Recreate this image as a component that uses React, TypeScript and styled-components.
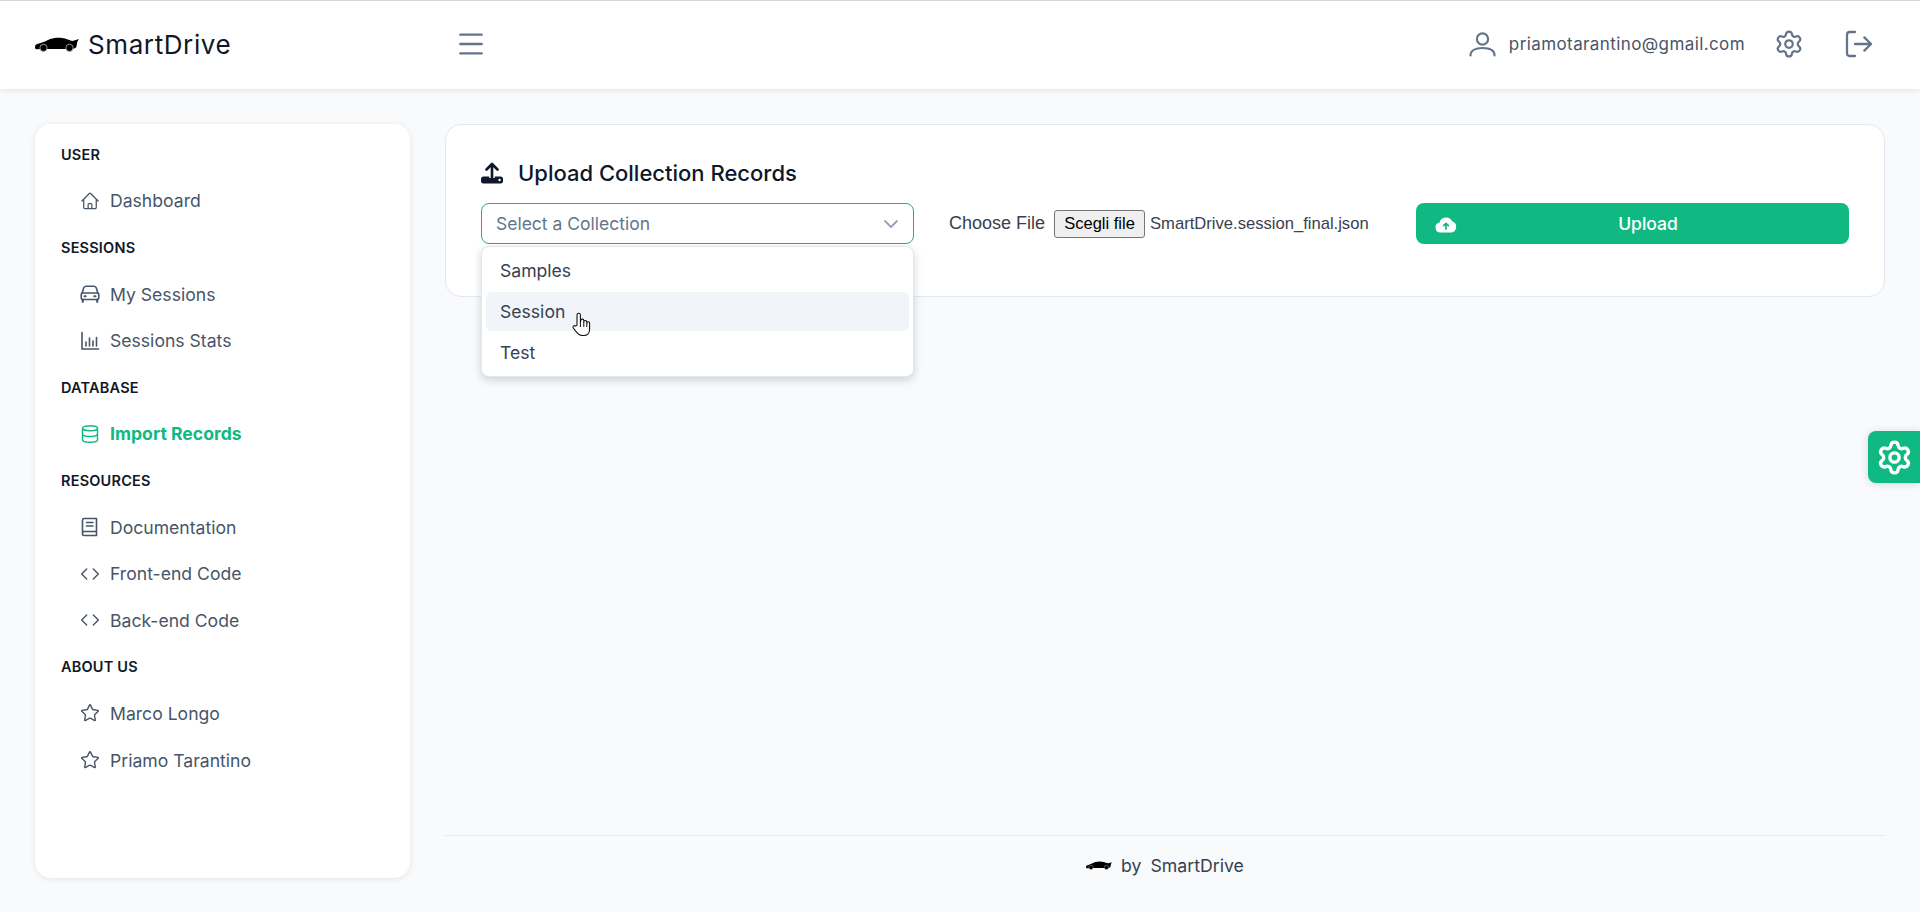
import React from "react";
import styled, { createGlobalStyle } from "styled-components";
import { ChevronDown, Code, Database, LogOut, Menu, Settings, Star } from "lucide-react";
import { HiOutlineHome } from "react-icons/hi2";

const GlobalStyle = createGlobalStyle`
  html, body {
    margin: 0;
    padding: 0;
    background: #f9fafb;
  }
  * {
    box-sizing: border-box;
  }
  body {
    font-family: "Inter", "Liberation Sans", sans-serif;
    color: #374151;
  }
`;

const Page = styled.div`
  height: 912px;
  display: flex;
  flex-direction: column;
  overflow: hidden;
`;

const TopBar = styled.header`
  height: 89px;
  flex-shrink: 0;
  display: flex;
  align-items: center;
  padding: 0 35px 2px;
  background: #fff;
  border-top: 1px solid #d9d9d9;
  box-shadow: 0 1px 6px rgba(0, 0, 0, 0.1);
`;

const Brand = styled.div`
  width: 423px;
  display: flex;
  align-items: center;
  gap: 9px;
  font-size: 26px;
  letter-spacing: 0.6px;
  color: #111827;
`;

const BarIcon = styled.span`
  display: flex;
  color: #64748b;
`;

const UserArea = styled.div`
  margin-left: auto;
  display: flex;
  align-items: center;
`;

const Email = styled.span`
  margin: 0 29px 0 13px;
  font-size: 17px;
  letter-spacing: 0.4px;
  color: #475569;
`;

const LogoutIcon = styled(BarIcon)`
  margin: 0 10px 0 39px;
`;

const Body = styled.div`
  flex: 1;
  min-height: 0;
  display: flex;
  gap: 35px;
  padding: 35px 35px 34px;
`;

const Sidebar = styled.nav`
  width: 375px;
  flex-shrink: 0;
  padding: 7px 25px;
  display: grid;
  grid-auto-rows: 46.6px;
  background: #fff;
  border-radius: 16px;
  box-shadow: 0 1px 6px rgba(0, 0, 0, 0.09);
`;

const SectionLabel = styled.div`
  display: flex;
  align-items: center;
  padding-left: 1px;
  font-size: 14.5px;
  font-weight: 600;
  letter-spacing: 0.2px;
  color: #111827;
`;

const NavItem = styled.a<{ $active?: boolean }>`
  display: flex;
  align-items: center;
  gap: 10px;
  padding-left: 20px;
  font-size: 17.6px;
  font-weight: ${({ $active }) => ($active ? 700 : 400)};
  color: ${({ $active }) => ($active ? "#10b981" : "#475569")};
`;

const IconSlot = styled.span`
  width: 20px;
  flex-shrink: 0;
  display: flex;
  justify-content: center;
`;

const Content = styled.main`
  flex: 1;
  min-width: 0;
  display: flex;
  flex-direction: column;
`;

const UploadCard = styled.section`
  height: 173px;
  padding: 34px 35px 0;
  background: #fff;
  border: 1px solid #e2e8f0;
  border-radius: 16px;
`;

const CardTitle = styled.h2`
  margin: 0;
  height: 28px;
  display: flex;
  align-items: center;
  gap: 15px;
  font-size: 22px;
  font-weight: 500;
  color: #0f172a;
`;

const UploadRow = styled.div`
  margin-top: 16px;
  display: flex;
  align-items: center;
`;

const SelectWrap = styled.div`
  position: relative;
  width: 433px;
  flex-shrink: 0;
`;

const SelectBox = styled.div`
  height: 41px;
  padding: 0 10px 0 14px;
  display: flex;
  align-items: center;
  justify-content: space-between;
  font-size: 17.5px;
  color: #64748b;
  background: #fff;
  border: 1px solid #10b981;
  border-radius: 8px;
`;

const Dropdown = styled.ul`
  position: absolute;
  top: 43px;
  left: 0;
  right: 0;
  margin: 0;
  padding: 4px;
  list-style: none;
  background: #fff;
  border: 1px solid #e2e8f0;
  border-radius: 8px;
  box-shadow: 0 3px 8px rgba(15, 23, 42, 0.18);
`;

const Option = styled.li<{ $hover?: boolean }>`
  height: 39px;
  margin-bottom: 2px;
  padding: 0 14px;
  display: flex;
  align-items: center;
  font-size: 17.6px;
  color: #374151;
  border-radius: 6px;
  background: ${({ $hover }) => ($hover ? "#f1f5f9" : "transparent")};
  &:last-child {
    margin-bottom: 0;
  }
`;

const Pointer = styled.svg`
  position: absolute;
  left: 91px;
  top: 109px;
`;

const FileField = styled.div`
  margin-left: 35px;
  width: 467px;
  flex-shrink: 0;
  display: flex;
  align-items: center;
  font-family: "Liberation Sans", Arial, sans-serif;
  color: #374151;
`;

const FileLabel = styled.span`
  font-size: 18px;
  margin-right: 9px;
`;

const FileButton = styled.button`
  width: 91px;
  height: 28px;
  padding: 0;
  margin-right: 5px;
  font-family: inherit;
  font-size: 16.5px;
  color: #000;
  background: #efefef;
  border: 1px solid #767676;
  border-radius: 3px;
`;

const FileName = styled.span`
  font-size: 16.6px;
`;

const UploadButton = styled.button`
  flex: 1;
  height: 41px;
  padding: 0 10px 0 19px;
  display: flex;
  align-items: center;
  font-family: inherit;
  font-size: 17.5px;
  font-weight: 500;
  color: #fff;
  background: #10b981;
  border: none;
  border-radius: 8px;
`;

const UploadText = styled.span`
  flex: 1;
  text-align: center;
`;

const Footer = styled.footer`
  margin-top: auto;
  height: 43px;
  padding-top: 17px;
  display: flex;
  align-items: center;
  justify-content: center;
  gap: 9px;
  font-size: 17.7px;
  color: #334155;
  border-top: 1px solid #e2e8f0;
`;

const SettingsTab = styled.button`
  position: fixed;
  right: 0;
  top: 431px;
  width: 52px;
  height: 52px;
  padding: 0;
  display: flex;
  align-items: center;
  justify-content: center;
  color: #fff;
  background: #10b981;
  border: none;
  border-radius: 8px 0 0 8px;
  box-shadow: 0 1px 8px rgba(0, 0, 0, 0.15);
`;

const CarLogo: React.FC<{ width: number }> = ({ width }) => (
  <svg width={width} height={(width * 15) / 44} viewBox="0 0 44 15">
    <path
      d="M0 10.5C0 8 1 7.4 4 6.600 8 5.600 12 3.400 16 1.800 20 .4 26 .3 30 1.600c2.400.8 5 1.900 7.400 2.400L44 2l-1.600 2.600-.9 4.600c-.2 1.600-1.600 2.300-3.500 2.500l-1.300.3H10.500L1.600 12.300C.5 12 0 11.500 0 10.500Z"
      fill="#000"
    />
    <circle cx="8.500" cy="10.800" r="3.600" fill="#000" stroke="#b0b0b0" strokeWidth="0.8" />
    <circle cx="34.500" cy="10.800" r="3.600" fill="#000" stroke="#b0b0b0" strokeWidth="0.8" />
  </svg>
);

const UserIcon = () => (
  <svg width="27" height="25" viewBox="0 0 27 25" fill="none" stroke="currentColor" strokeWidth="2.200" strokeLinecap="round">
    <circle cx="13.500" cy="7" r="5.600" />
    <path d="M1.500 23.500c0-5 5-7.500 12-7.500s12 2.500 12 7.500" />
  </svg>
);

const CarIcon = () => (
  <svg width="20" height="18" viewBox="0 0 20 18" fill="none" stroke="currentColor" strokeWidth="1.600" strokeLinecap="round" strokeLinejoin="round">
    <path d="M2 8.500 3.700 3A2.500 2.500 0 0 1 6 1.200h8A2.500 2.500 0 0 1 16.300 3L18 8.500" />
    <rect x="1.200" y="8" width="17.600" height="6.500" rx="1.500" />
    <path d="M2.800 14.500v2.300M17.200 14.500v2.300" strokeWidth="2.200" />
    <path d="M4.500 11.200h1.200M14.300 11.200h1.200" strokeWidth="2" />
  </svg>
);

const ChartIcon = () => (
  <svg width="20" height="20" viewBox="0 0 20 20" fill="none" stroke="currentColor" strokeWidth="1.600" strokeLinecap="round">
    <path d="M2 1.500V18H18.500" />
    <path d="M6 15v-4M9.500 15V7M13 15v-5M16.500 15V6.500" />
  </svg>
);

const BookIcon = () => (
  <svg width="20" height="20" viewBox="0 0 20 20" fill="none" stroke="currentColor" strokeWidth="1.600" strokeLinecap="round" strokeLinejoin="round">
    <path d="M2.500 16V3a1.500 1.500 0 0 1 1.500-1.500h12.500V18.500H4a1.500 1.500 0 0 1-1.500-1.500V16A1.500 1.500 0 0 1 4 14.500h12.500" />
    <path d="M6.500 5.500h6.500M6.500 9h6.500" />
  </svg>
);

const TrayUploadIcon = () => (
  <svg width="22" height="22" viewBox="0 0 22 22">
    <rect x="0" y="14.500" width="22" height="7" rx="2.500" fill="#0f172a" />
    <path d="M11 9v7" stroke="#fff" strokeWidth="5.500" />
    <path d="M11 16.500V2M5.500 7.500 11 2l5.500 5.500" fill="none" stroke="#0f172a" strokeWidth="2.600" strokeLinecap="round" strokeLinejoin="round" />
    <circle cx="18.600" cy="18" r="1.200" fill="#fff" />
  </svg>
);

const CloudUploadIcon = () => (
  <svg width="22" height="18" viewBox="0 0 22 18">
    <path d="M5.500 17.500a5 5 0 0 1-1-9.900A6.800 6.800 0 0 1 17.200 6.300 5.800 5.800 0 0 1 16.500 17.500Z" fill="#fff" />
    <path d="M11 14V8.500M8.600 10.700 11 8.300l2.400 2.400" fill="none" stroke="#10b981" strokeWidth="1.700" strokeLinecap="round" strokeLinejoin="round" />
  </svg>
);

const HandCursor = () => (
  <Pointer width="19" height="26" viewBox="0 0 19 26">
    <path
      d="M5 13V3a1.700 1.700 0 0 1 3.400 0v7l.4-1.500a1.500 1.500 0 0 1 3 .2v1.300a1.500 1.500 0 0 1 3 .1v1a1.400 1.400 0 0 1 2.800.2v6.200c0 3.500-2.400 6-5.600 6H10c-2.500 0-4-1.300-5.300-3.200L1.300 16c-.9-1.400.9-3 2.200-1.900Z"
      fill="#fff"
      stroke="#111"
      strokeWidth="1.100"
      strokeLinejoin="round"
    />
    <path d="M8.400 10v5M11.800 10v5M14.800 11v4" stroke="#111" strokeWidth="1" />
  </Pointer>
);

type NavEntry = { label: string; icon: React.ReactNode; active?: boolean };

const NAV: { title: string; items: NavEntry[] }[] = [
  { title: "USER", items: [{ label: "Dashboard", icon: <HiOutlineHome size={22} /> }] },
  {
    title: "SESSIONS",
    items: [
      { label: "My Sessions", icon: <CarIcon /> },
      { label: "Sessions Stats", icon: <ChartIcon /> },
    ],
  },
  {
    title: "DATABASE",
    items: [{ label: "Import Records", icon: <Database size={20} strokeWidth={1.7} />, active: true }],
  },
  {
    title: "RESOURCES",
    items: [
      { label: "Documentation", icon: <BookIcon /> },
      { label: "Front-end Code", icon: <Code size={20} strokeWidth={1.7} /> },
      { label: "Back-end Code", icon: <Code size={20} strokeWidth={1.7} /> },
    ],
  },
  {
    title: "ABOUT US",
    items: [
      { label: "Marco Longo", icon: <Star size={20} strokeWidth={1.7} /> },
      { label: "Priamo Tarantino", icon: <Star size={20} strokeWidth={1.7} /> },
    ],
  },
];

const App: React.FC = () => (
  <Page>
    <GlobalStyle />
    <TopBar>
      <Brand>
        <CarLogo width={44} />
        SmartDrive
      </Brand>
      <BarIcon>
        <Menu size={32} strokeWidth={1.8} style={{ margin: "0 -3px" }} />
      </BarIcon>
      <UserArea>
        <BarIcon>
          <UserIcon />
        </BarIcon>
        <Email>priamotarantino@gmail.com</Email>
        <BarIcon>
          <Settings size={30} strokeWidth={1.8} />
        </BarIcon>
        <LogoutIcon>
          <LogOut size={32} strokeWidth={1.7} />
        </LogoutIcon>
      </UserArea>
    </TopBar>
    <Body>
      <Sidebar>
        {NAV.map((section) => (
          <React.Fragment key={section.title}>
            <SectionLabel>{section.title}</SectionLabel>
            {section.items.map((item) => (
              <NavItem key={item.label} $active={item.active}>
                <IconSlot>{item.icon}</IconSlot>
                {item.label}
              </NavItem>
            ))}
          </React.Fragment>
        ))}
      </Sidebar>
      <Content>
        <UploadCard>
          <CardTitle>
            <TrayUploadIcon />
            Upload Collection Records
          </CardTitle>
          <UploadRow>
            <SelectWrap>
              <SelectBox>
                Select a Collection
                <ChevronDown size={24} color="#94a3b8" strokeWidth={1.8} />
              </SelectBox>
              <Dropdown>
                <Option>Samples</Option>
                <Option $hover>Session</Option>
                <Option>Test</Option>
              </Dropdown>
              <HandCursor />
            </SelectWrap>
            <FileField>
              <FileLabel>Choose File</FileLabel>
              <FileButton>Scegli file</FileButton>
              <FileName>SmartDrive.session_final.json</FileName>
            </FileField>
            <UploadButton>
              <CloudUploadIcon />
              <UploadText>Upload</UploadText>
            </UploadButton>
          </UploadRow>
        </UploadCard>
        <Footer>
          <CarLogo width={26} />
          <span>by</span>
          <span>SmartDrive</span>
        </Footer>
      </Content>
    </Body>
    <SettingsTab>
      <Settings size={37} strokeWidth={2.2} />
    </SettingsTab>
  </Page>
);

export default App;
